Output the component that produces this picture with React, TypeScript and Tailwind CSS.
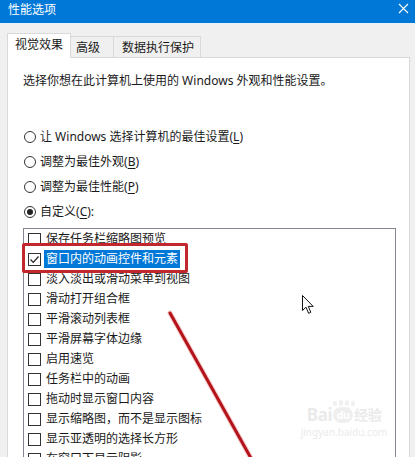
import React from 'react';

const items = [
  '保存任务栏缩略图预览',
  '窗口内的动画控件和元素',
  '淡入淡出或滑动菜单到视图',
  '滑动打开组合框',
  '平滑滚动列表框',
  '平滑屏幕字体边缘',
  '启用速览',
  '任务栏中的动画',
  '拖动时显示窗口内容',
  '显示缩略图，而不是显示图标',
  '显示亚透明的选择长方形',
  '在窗口下显示阴影',
];

const radios: { label: string; key: string; checked?: boolean; tail?: string }[] = [
  { label: '让 Windows 选择计算机的最佳设置', key: 'L' },
  { label: '调整为最佳外观', key: 'B' },
  { label: '调整为最佳性能', key: 'P' },
  { label: '自定义', key: 'C', checked: true, tail: ':' },
];

const Radio = ({ checked }: { checked?: boolean }) => (
  <span className="w-[12px] h-[12px] rounded-full border border-[#333] bg-white flex items-center justify-center shrink-0">
    {checked && <span className="w-[6px] h-[6px] rounded-full bg-[#222]" />}
  </span>
);

const Checkbox = ({ checked }: { checked?: boolean }) => (
  <span className="w-[13px] h-[13px] border border-[#333] bg-white flex items-center justify-center shrink-0">
    {checked && (
      <svg width="11" height="11" viewBox="0 0 11 11">
        <path d="M1.5 5.5 L4.3 8.3 L9.5 2.5" fill="none" stroke="#222" strokeWidth="1.2" />
      </svg>
    )}
  </span>
);

const App: React.FC = () => {
  return (
    <div className="relative w-[415px] h-[457px] overflow-hidden bg-[#f0f0f0] text-[12px] text-[#1a1a1a] font-['Noto_Sans','Noto_Sans_CJK_SC',sans-serif]">
      {/* Title bar */}
      <div className="h-[23px] bg-[#0078d7] flex items-center justify-between pl-[8px] pr-[6px] text-white">
        <span className="leading-none -mt-[4px]">性能选项</span>
        <svg width="11" height="11" viewBox="0 0 11 11" className="-mt-[6px]">
          <path d="M1 1 L10 10 M10 1 L1 10" stroke="#fff" strokeWidth="1.1" />
        </svg>
      </div>

      {/* Tabs */}
      <div className="h-[34px] flex items-end pl-[7px]">
        <div className="relative z-10 h-[25px] -mb-px px-[7px] bg-white border-l border-t border-r border-[#d9d9d9] flex items-center pb-[2px]">
          视觉效果
        </div>
        <div className="h-[21px] w-[43px] border-t border-r border-[#d9d9d9] bg-[#f0f0f0] flex items-center pl-[5px] pt-[1px]">
          高级
        </div>
        <div className="h-[21px] w-[87px] border-t border-r border-[#d9d9d9] bg-[#f0f0f0] flex items-center pl-[8px] pt-[1px]">
          数据执行保护
        </div>
      </div>

      {/* Panel */}
      <div className="ml-[7px] mr-[5px] h-[420px] bg-white border border-[#d9d9d9] pl-[15px] pr-[13px]">
        <p className="mt-[15px] leading-[16px]">选择你想在此计算机上使用的 Windows 外观和性能设置。</p>

        <div className="mt-[35px] flex flex-col">
          {radios.map((r) => (
            <div key={r.key} className="h-[25px] flex items-center gap-[4px] pl-[1px]">
              <Radio checked={r.checked} />
              <span>
                {r.label}(<span className="underline underline-offset-2">{r.key}</span>){r.tail}
              </span>
            </div>
          ))}
        </div>

        <div className="mt-[4px] h-[240px] border border-[#828790] border-b-0 pl-[4px]">
          {items.map((t, i) => (
            <div key={t} className="h-[20px] flex items-center gap-[3px]">
              <Checkbox checked={i === 1} />
              <span
                className={
                  i === 1
                    ? 'h-[18px] flex items-center px-[2px] bg-[#0078d7] text-white'
                    : 'px-[2px]'
                }
              >
                {t}
              </span>
            </div>
          ))}
        </div>
      </div>

      {/* Red highlight box */}
      <div className="absolute left-[22px] top-[243px] w-[166px] h-[30px] border-[3px] border-[#c1272d] rounded-[2px]" />

      {/* Red pointer line */}
      <svg className="absolute left-0 top-0 pointer-events-none" width="415" height="457">
        <line x1="170" y1="313" x2="252" y2="460" stroke="#f6c9c9" strokeWidth="5" strokeLinecap="round" />
        <line x1="170" y1="313" x2="252" y2="460" stroke="#b3141c" strokeWidth="3" strokeLinecap="round" />
      </svg>

      {/* Mouse cursor */}
      <svg className="absolute left-[302px] top-[295px]" width="13" height="20" viewBox="0 0 13 20">
        <path
          d="M0.5 0.5 L0.5 15.5 L4 12.2 L6.6 18.3 L8.8 17.3 L6.3 11.4 L11.2 11.4 Z"
          fill="#fff"
          stroke="#111"
          strokeWidth="1"
          strokeLinejoin="round"
        />
      </svg>

      {/* Watermark */}
      <div className="absolute left-[294px] top-[396px] w-[100px] h-[52px] bg-white flex flex-col items-center text-[#eaeaea]">
        <div className="flex gap-[2px] h-[10px] items-end">
          <span className="w-[4px] h-[5px] rounded-full bg-[#f0f0f0]" />
          <span className="w-[4px] h-[6px] rounded-full bg-[#f0f0f0]" />
          <span className="w-[4px] h-[6px] rounded-full bg-[#f0f0f0]" />
          <span className="w-[4px] h-[5px] rounded-full bg-[#f0f0f0]" />
        </div>
        <div className="flex items-center font-bold text-[17px] leading-[18px] tracking-tight">
          <span>Bai</span>
          <span className="mx-[1px] w-[20px] h-[16px] rounded-full bg-[#efefef] text-white text-[11px] flex items-center justify-center">du</span>
          <span className="text-[14px]">经验</span>
        </div>
        <div className="text-[10px] leading-[12px] mt-[2px]">jingyan.baidu.com</div>
      </div>
    </div>
  );
};

export default App;
